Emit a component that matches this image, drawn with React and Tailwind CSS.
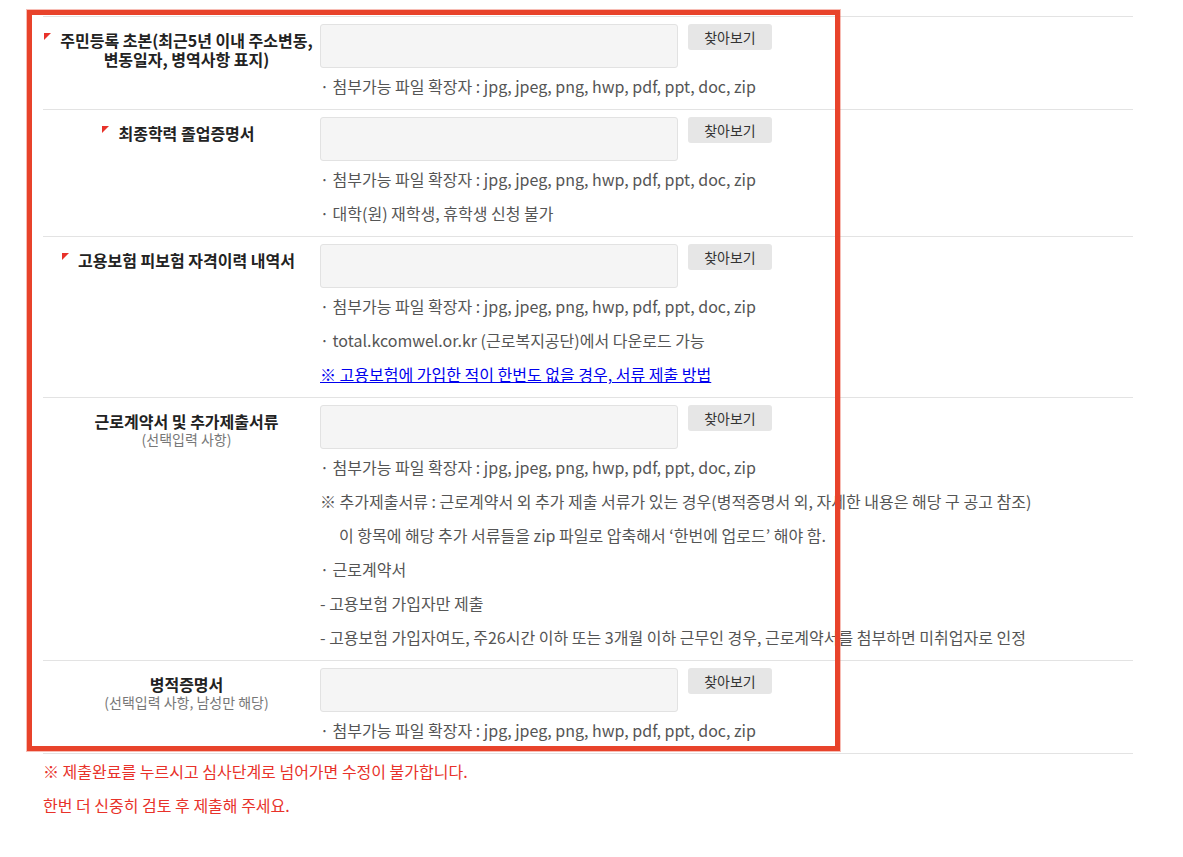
import React from "react";

const EXT = "· 첨부가능 파일 확장자 : jpg, jpeg, png, hwp, pdf, ppt, doc, zip";

function Marker() {
  return (
    <span className="absolute left-[-16px] top-[2px] w-0 h-0 border-t-[7px] border-t-[#e8322a] border-r-[7px] border-r-transparent" />
  );
}

function Label({ required, children, sub }) {
  return (
    <div className="w-[277px] shrink-0 pl-[10px] pt-[7px] text-center">
      <div className="text-[16px] leading-[19px] font-bold text-[#222]">
        <span className="relative inline-block">
          {required && <Marker />}
          {children}
        </span>
      </div>
      {sub && <div className="text-[14px] leading-[17px] text-[#777]">{sub}</div>}
    </div>
  );
}

function FileInput() {
  return (
    <div className="flex items-start gap-[10px]">
      <div className="w-[358px] h-[44px] bg-[#f5f5f5] border border-[#e2e2e2] rounded-[3px]" />
      <button className="w-[84px] h-[26px] bg-[#e6e6e6] rounded-[3px] text-[14px] leading-[26px] text-[#333] pb-[2px]">
        찾아보기
      </button>
    </div>
  );
}

function Row({ label, required, sub, children }) {
  return (
    <div className="flex border-t border-[#e3e3e3] pt-[7px] pb-[6px]">
      <Label required={required} sub={sub}>
        {label}
      </Label>
      <div>
        <FileInput />
        <div className="mt-[1px] text-[16px] leading-[34px] text-[#555] whitespace-nowrap">{children}</div>
      </div>
    </div>
  );
}

export default function App() {
  return (
    <div
      className="relative w-[1183px] h-[857px] bg-white overflow-hidden"
      style={{ fontFamily: '"Noto Sans CJK KR", "Noto Sans", sans-serif' }}
    >
      <div className="ml-[43px] w-[1090px]">
        <div className="relative h-[16px] overflow-hidden">
          <div className="absolute left-[277px] top-[-28px] text-[16px] leading-[34px] text-[#f2b8b8] whitespace-nowrap">
            · 첨부가능 파일 확장자 : jpg, jpeg, p<span className="text-[#e8322a]">n</span>g, hwp, pdf, ppt, doc, zip, jpg
          </div>
        </div>

        <Row
          required
          label={
            <>
              주민등록 초본(최근5년 이내 주소변동,
              <br />
              변동일자, 병역사항 표지)
            </>
          }
        >
          <div>{EXT}</div>
        </Row>

        <Row required label="최종학력 졸업증명서">
          <div>{EXT}</div>
          <div>· 대학(원) 재학생, 휴학생 신청 불가</div>
        </Row>

        <Row required label="고용보험 피보험 자격이력 내역서">
          <div>{EXT}</div>
          <div>· total.kcomwel.or.kr (근로복지공단)에서 다운로드 가능</div>
          <div>
            <a href="#" className="text-[#0000ee] underline">
              ※ 고용보험에 가입한 적이 한번도 없을 경우, 서류 제출 방법
            </a>
          </div>
        </Row>

        <Row label="근로계약서 및 추가제출서류" sub="(선택입력 사항)">
          <div>{EXT}</div>
          <div>※ 추가제출서류 : 근로계약서 외 추가 제출 서류가 있는 경우(병적증명서 외, 자세한 내용은 해당 구 공고 참조)</div>
          <div className="pl-[19px]">이 항목에 해당 추가 서류들을 zip 파일로 압축해서 ‘한번에 업로드’ 해야 함.</div>
          <div>· 근로계약서</div>
          <div>- 고용보험 가입자만 제출</div>
          <div>- 고용보험 가입자여도, 주26시간 이하 또는 3개월 이하 근무인 경우, 근로계약서를 첨부하면 미취업자로 인정</div>
        </Row>

        <Row label="병적증명서" sub="(선택입력 사항, 남성만 해당)">
          <div>{EXT}</div>
        </Row>

        <div className="border-t border-[#e3e3e3] text-[16px] leading-[34px] text-[#e8322a]">
          <div>※ 제출완료를 누르시고 심사단계로 넘어가면 수정이 불가합니다.</div>
          <div>한번 더 신중히 검토 후 제출해 주세요.</div>
        </div>
      </div>

      <div className="absolute left-[27px] top-[10px] w-[813px] h-[741px] border-[5px] border-[#e8432b] shadow-[0_0_0_1px_rgba(232,67,43,0.35)] pointer-events-none" />
    </div>
  );
}
